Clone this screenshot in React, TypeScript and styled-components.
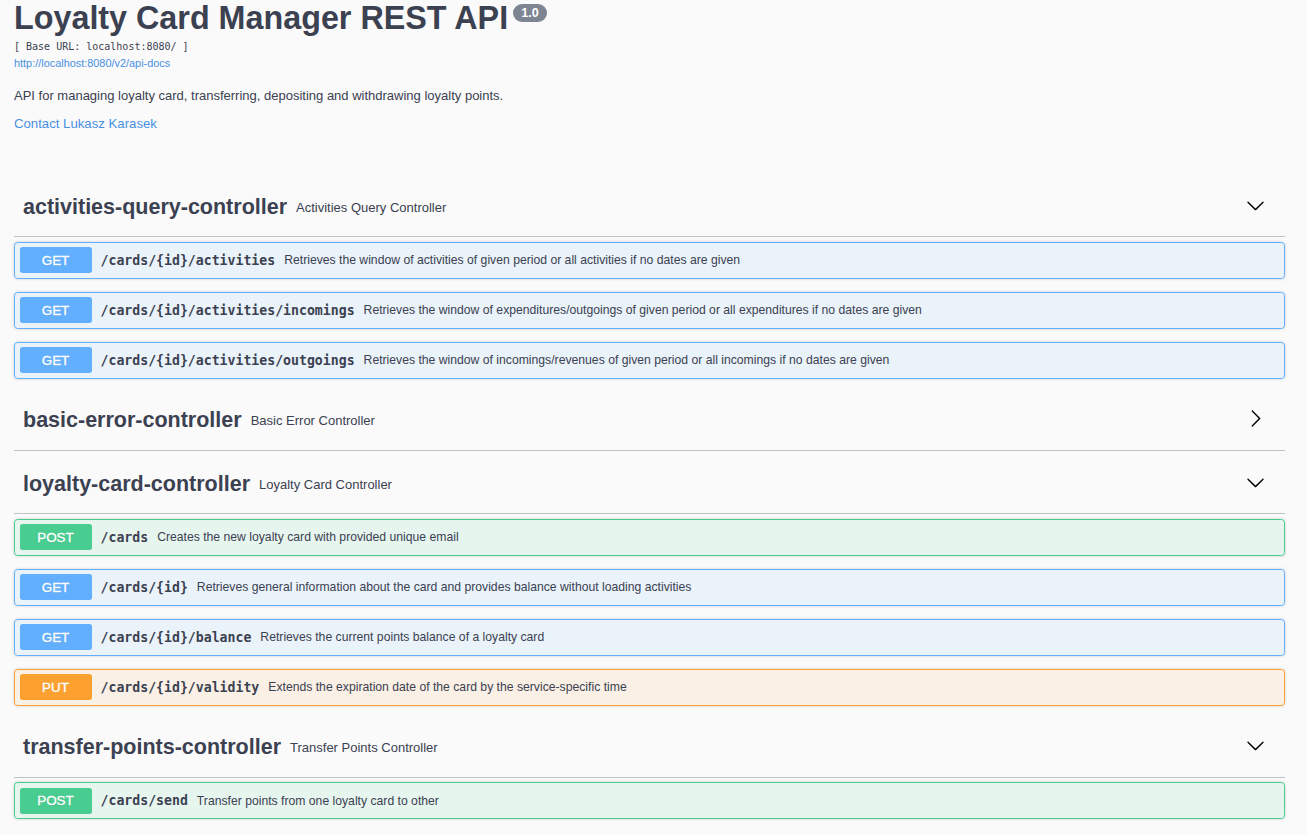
import React from "react";
import styled, { createGlobalStyle } from "styled-components";

const Global = createGlobalStyle`
  html, body { margin: 0; padding: 0; background: #fafafa; }
  body { font-family: "Liberation Sans", Arial, sans-serif; color: #3b4151; }
`;

const Page = styled.div`
  padding: 0 22px 0 14px;
`;

const Info = styled.div`
  display: flex;
  flex-direction: column;
  align-items: flex-start;
  margin-bottom: 46px;
`;

const Title = styled.h2`
  margin: 0;
  font-size: 32.3px;
  line-height: 37px;
  font-weight: 700;
  color: #3b4151;
  display: flex;
  align-items: flex-start;
`;

const Version = styled.span`
  display: inline-flex;
  align-items: center;
  justify-content: center;
  margin: 4px 0 0 5px;
  height: 18px;
  padding: 0 8px;
  border-radius: 57px;
  background: #7d8492;
  color: #fff;
  font-size: 12.6px;
  font-weight: 700;
`;

const BaseUrl = styled.div`
  margin-top: 3px;
  font-family: "DejaVu Sans Mono", "Liberation Mono", monospace;
  font-size: 10px;
  line-height: 14px;
  color: #3b4151;
`;

const DocLink = styled.a`
  margin-top: 2px;
  font-size: 10.9px;
  line-height: 14px;
  color: #4990e2;
  text-decoration: none;
`;

const Description = styled.p`
  margin: 18px 0 0;
  font-size: 13px;
  line-height: 16px;
  color: #3b4151;
`;

const Contact = styled.a`
  margin-top: 12px;
  font-size: 13.2px;
  line-height: 16px;
  color: #4990e2;
  text-decoration: none;
`;

const Section = styled.section`
  display: flex;
  flex-direction: column;
`;

const TagHeader = styled.div`
  display: flex;
  align-items: center;
  height: 58px;
  padding: 0 20px 0 9px;
  border-bottom: 1px solid rgba(59, 65, 81, 0.3);
  margin-bottom: 4.5px;
  cursor: pointer;
`;

const TagName = styled.span`
  font-size: 21.5px;
  font-weight: 700;
  color: #3b4151;
`;

const TagDesc = styled.small`
  flex: 1;
  margin-left: 9px;
  font-size: 13px;
  color: #3b4151;
`;

const Arrow = styled.svg`
  width: 19px;
  height: 19px;
  margin-bottom: 4px;
  fill: #000;
`;

const methodColors: Record<string, string> = {
  GET: "97, 175, 254",
  POST: "73, 204, 144",
  PUT: "252, 161, 48",
};

const Opblock = styled.div<{ $rgb: string }>`
  display: flex;
  align-items: center;
  box-sizing: border-box;
  height: 37px;
  padding: 0 4.5px;
  margin-bottom: 13px;
  border: 1px solid rgb(${(p) => p.$rgb});
  border-radius: 3.6px;
  background: rgba(${(p) => p.$rgb}, 0.1);
  box-shadow: 0 0 3px rgba(0, 0, 0, 0.19);
`;

const Method = styled.span<{ $rgb: string }>`
  display: flex;
  align-items: center;
  justify-content: center;
  width: 72px;
  height: 26px;
  border-radius: 2.7px;
  background: rgb(${(p) => p.$rgb});
  color: #fff;
  font-size: 13.4px;
  font-weight: 400;
  -webkit-text-stroke: 0.3px #fff;
  text-shadow: 0 1px 0 rgba(0, 0, 0, 0.1);
`;

const Path = styled.span`
  padding: 0 9px;
  font-family: "DejaVu Sans Mono", "Liberation Mono", monospace;
  font-size: 13.2px;
  font-weight: 700;
  color: #3b4151;
`;

const OpDesc = styled.span`
  font-size: 12.2px;
  color: #3b4151;
`;

type Op = { method: string; path: string; desc: string };
type Tag = { name: string; desc: string; open: boolean; ops: Op[] };

const tags: Tag[] = [
  {
    name: "activities-query-controller",
    desc: "Activities Query Controller",
    open: true,
    ops: [
      { method: "GET", path: "/cards/{id}/activities", desc: "Retrieves the window of activities of given period or all activities if no dates are given" },
      { method: "GET", path: "/cards/{id}/activities/incomings", desc: "Retrieves the window of expenditures/outgoings of given period or all expenditures if no dates are given" },
      { method: "GET", path: "/cards/{id}/activities/outgoings", desc: "Retrieves the window of incomings/revenues of given period or all incomings if no dates are given" },
    ],
  },
  { name: "basic-error-controller", desc: "Basic Error Controller", open: false, ops: [] },
  {
    name: "loyalty-card-controller",
    desc: "Loyalty Card Controller",
    open: true,
    ops: [
      { method: "POST", path: "/cards", desc: "Creates the new loyalty card with provided unique email" },
      { method: "GET", path: "/cards/{id}", desc: "Retrieves general information about the card and provides balance without loading activities" },
      { method: "GET", path: "/cards/{id}/balance", desc: "Retrieves the current points balance of a loyalty card" },
      { method: "PUT", path: "/cards/{id}/validity", desc: "Extends the expiration date of the card by the service-specific time" },
    ],
  },
  {
    name: "transfer-points-controller",
    desc: "Transfer Points Controller",
    open: true,
    ops: [{ method: "POST", path: "/cards/send", desc: "Transfer points from one loyalty card to other" }],
  },
];

const ArrowDown = () => (
  <Arrow viewBox="0 0 20 20">
    <path d="M17.418 6.109c.272-.268.709-.268.979 0s.271.701 0 .969l-7.908 7.83c-.27.268-.707.268-.979 0l-7.908-7.83c-.27-.268-.27-.701 0-.969.271-.268.709-.268.979 0L10 13.25l7.418-7.141z" />
  </Arrow>
);

const ArrowRight = () => (
  <Arrow viewBox="0 0 20 20">
    <path d="M13.25 10L6.109 2.58c-.268-.27-.268-.707 0-.979.268-.27.701-.27.969 0l7.83 7.908c.268.271.268.709 0 .979l-7.83 7.908c-.268.271-.701.27-.969 0-.268-.269-.268-.707 0-.979L13.25 10z" />
  </Arrow>
);

export default function App() {
  return (
    <>
      <Global />
      <Page>
        <Info>
          <Title>
            Loyalty Card Manager REST API
            <Version>1.0</Version>
          </Title>
          <BaseUrl>[ Base URL: localhost:8080/ ]</BaseUrl>
          <DocLink href="#">http://localhost:8080/v2/api-docs</DocLink>
          <Description>API for managing loyalty card, transferring, depositing and withdrawing loyalty points.</Description>
          <Contact href="#">Contact Lukasz Karasek</Contact>
        </Info>
        {tags.map((t) => (
          <Section key={t.name}>
            <TagHeader>
              <TagName>{t.name}</TagName>
              <TagDesc>{t.desc}</TagDesc>
              {t.open ? <ArrowDown /> : <ArrowRight />}
            </TagHeader>
            {t.open &&
              t.ops.map((o) => (
                <Opblock key={o.method + o.path} $rgb={methodColors[o.method]}>
                  <Method $rgb={methodColors[o.method]}>{o.method}</Method>
                  <Path>{o.path}</Path>
                  <OpDesc>{o.desc}</OpDesc>
                </Opblock>
              ))}
          </Section>
        ))}
      </Page>
    </>
  );
}
